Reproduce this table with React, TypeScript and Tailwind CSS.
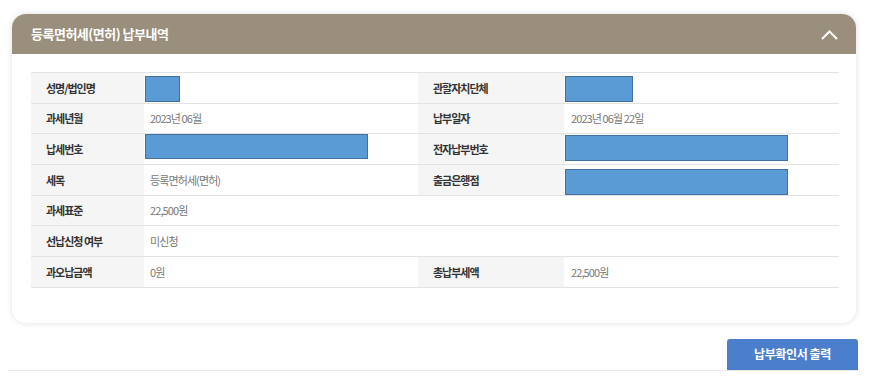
import React from "react";

type Cell = { label: string; value?: string; box?: string; span?: boolean };

const rows: Cell[][] = [
  [
    { label: "성명/법인명", box: "left-[1px] top-[3px] w-[35px] h-[26px]" },
    { label: "관할자치단체", box: "left-[1px] top-[3px] w-[68px] h-[26px]" },
  ],
  [
    { label: "과세년월", value: "2023년 06월" },
    { label: "납부일자", value: "2023년 06월 22일" },
  ],
  [
    { label: "납세번호", box: "left-[1px] top-0 w-[223px] h-[25px]" },
    { label: "전자납부번호", box: "left-[1px] top-[1px] w-[223px] h-[26px]" },
  ],
  [
    { label: "세목", value: "등록면허세(면허)" },
    { label: "출금은행점", box: "left-[1px] top-[4px] w-[223px] h-[26px]" },
  ],
  [{ label: "과세표준", value: "22,500원", span: true }],
  [{ label: "선납신청 여부", value: "미신청", span: true }],
  [
    { label: "과오납금액", value: "0원" },
    { label: "총납부세액", value: "22,500원" },
  ],
];

export default function App() {
  return (
    <div
      className="w-[871px] h-[389px] bg-white pt-[14px] overflow-hidden"
      style={{ fontFamily: '"Noto Sans CJK KR", "Noto Sans", sans-serif' }}
    >
      {/* 납부내역 카드 */}
      <div className="ml-[12px] w-[844px] rounded-[14px] bg-white shadow-[0_0_6px_rgba(0,0,0,0.13)] overflow-hidden">
        <div className="h-[40px] bg-[#9a8e7c] flex items-center justify-between pl-[19px] pr-[18px]">
          <span className="text-white text-[13px] font-bold tracking-[-0.5px]">
            등록면허세(면허) 납부내역
          </span>
          <svg width="17" height="10" viewBox="0 0 17 10" className="mt-[1px]">
            <polyline points="1,9 8.5,1.5 16,9" fill="none" stroke="white" strokeWidth="2" />
          </svg>
        </div>

        <div className="pt-[18px] pb-[35px] pl-[19px] pr-[17px]">
          <div className="grid grid-cols-[113px_274px_146px_1fr] border-t border-[#e3e3e3]">
            {rows.map((row, ri) =>
              row.map((c, ci) => (
                <React.Fragment key={`${ri}-${ci}`}>
                  <div className="h-[30.7px] border-b border-[#e3e3e3] bg-[#f5f5f5] flex items-center pl-[15px] text-[11px] font-bold text-[#333] tracking-[-1px]">
                    {c.label}
                  </div>
                  <div
                    className={`relative h-[30.7px] border-b border-[#e3e3e3] flex items-center text-[11px] text-[#777] tracking-[-0.9px] ${
                      c.span ? "col-span-3 pl-[6px]" : ci === 0 ? "pl-[6px]" : "pl-[7px]"
                    }`}
                  >
                    {c.value}
                    {c.box && (
                      <div className={`absolute bg-[#5b9bd5] border border-[#41719c] ${c.box}`} />
                    )}
                  </div>
                </React.Fragment>
              ))
            )}
          </div>
        </div>
      </div>

      {/* 하단 버튼 */}
      <div className="ml-[8px] w-[850px] mt-[16px] flex justify-end border-b border-[#e8e8e8]">
        <button className="w-[131px] h-[31px] rounded-t-[3px] bg-[#4b7fcc] text-white text-[12px] font-bold tracking-[-0.4px]">
          납부확인서 출력
        </button>
      </div>
    </div>
  );
}
